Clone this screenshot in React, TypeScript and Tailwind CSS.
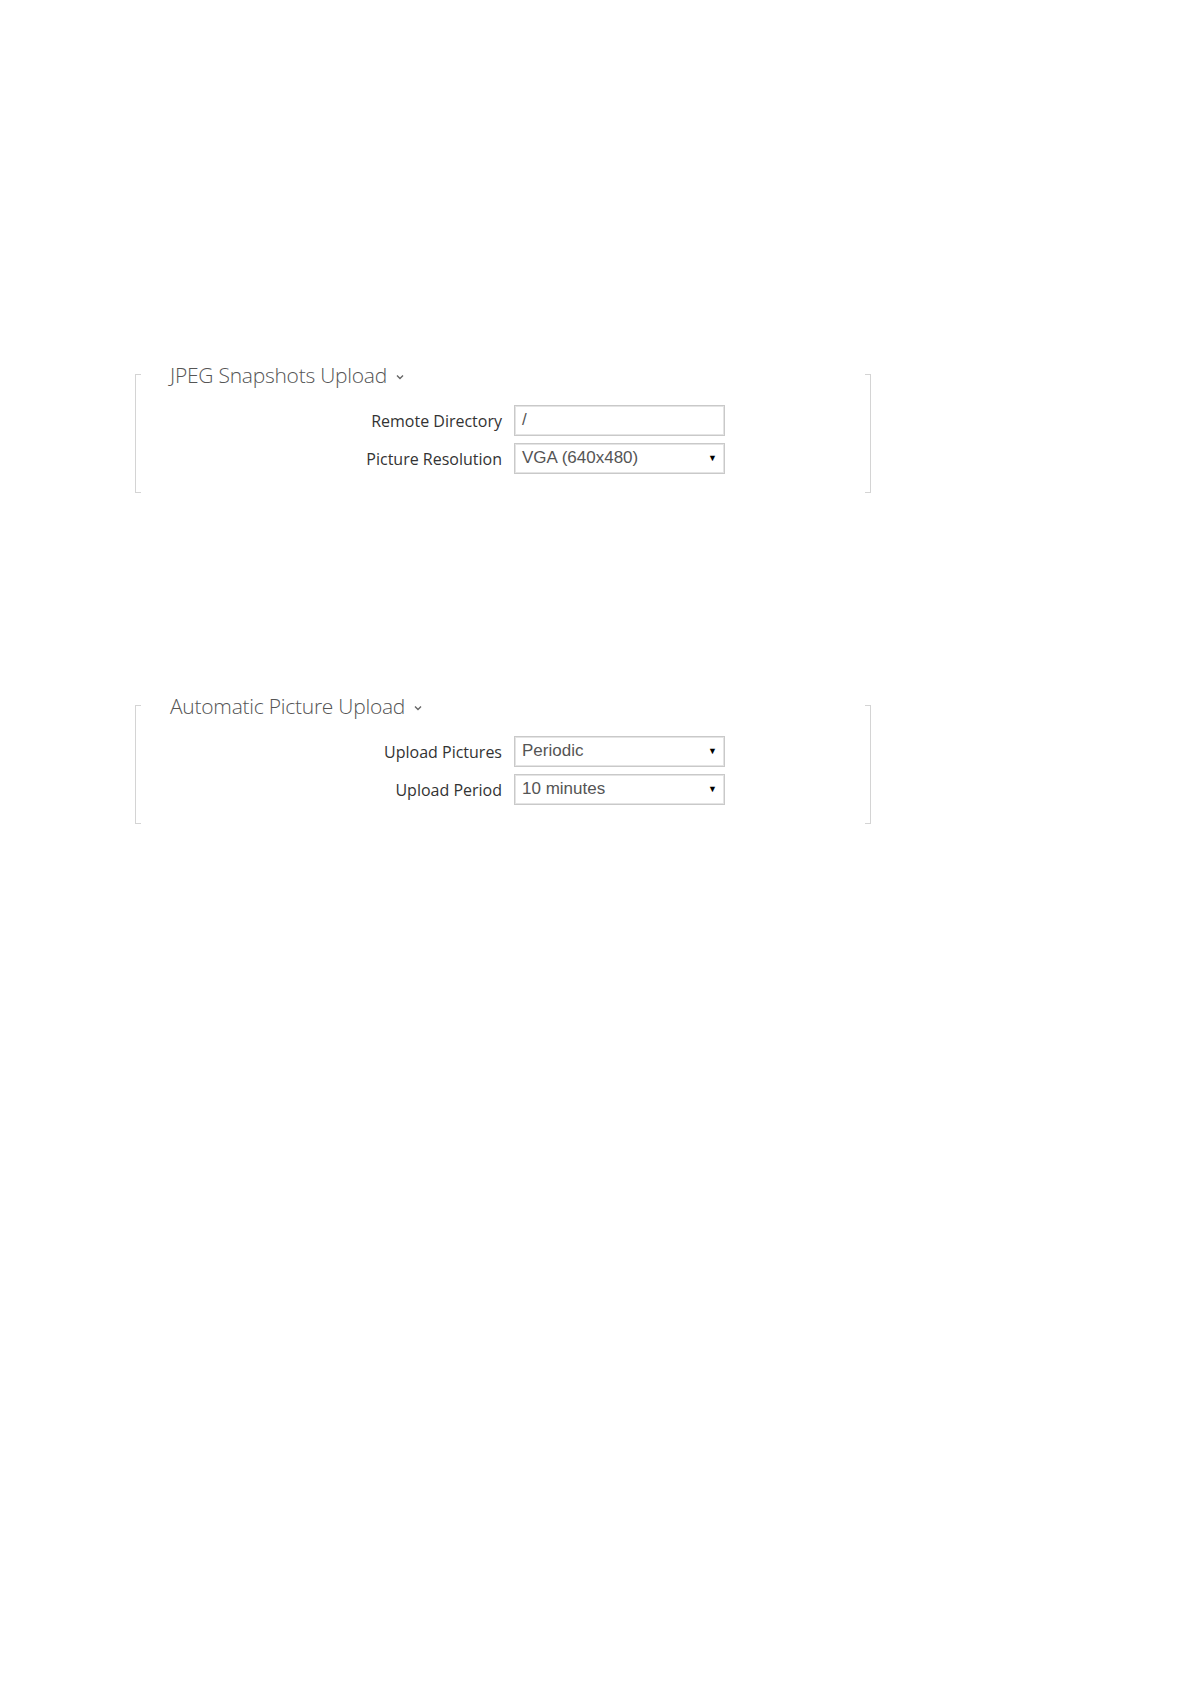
import type {ReactNode} from 'react';

interface FieldRow {
  label: string;
  value: string;
  kind: 'text' | 'select';
}

function Chevron() {
  return (
    <svg className="ml-[9px] mt-[4px] h-[6px] w-[8px]" viewBox="0 0 8 6" fill="none">
      <polyline points="1,1.5 4,4.5 7,1.5" stroke="#666" strokeWidth="1.4" />
    </svg>
  );
}

function Field({row}: {row: FieldRow}) {
  return (
    <div className="flex items-center">
      <div className="w-[373px] pr-[12px] text-right text-[16px] leading-[20px] text-[#333]">{row.label}</div>
      <div className="flex h-[31px] w-[211px] items-center justify-between border border-[#c9c9c9] bg-white pl-[7px] pr-[7px] font-['Liberation_Sans',Arial,sans-serif] text-[17px] text-[#555] shadow-[inset_0_0_0_1px_#e4e4e4]">
        <span className="-mt-[2px]">{row.value}</span>
        {row.kind === 'select' ? <span className="text-[9px] text-black">▼</span> : null}
      </div>
    </div>
  );
}

function Section({title, rows}: {title: string; rows: FieldRow[]}): ReactNode {
  return (
    <div className="flex h-[119px] w-[736px]">
      <div className="w-[6px] border-y border-l border-[#d4d4d4]" />
      <div className="flex-1">
        <div className="-mt-[14px] flex items-center pl-[29px] text-[21px] font-light leading-[30px] tracking-[-0.25px] text-[#555]">
          {title}
          <Chevron />
        </div>
        <div className="mt-[15px] flex flex-col gap-[7px]">
          {rows.map((row) => (
            <Field key={row.label} row={row} />
          ))}
        </div>
      </div>
      <div className="w-[6px] border-y border-r border-[#d4d4d4]" />
    </div>
  );
}

export default function App() {
  return (
    <div className="min-h-[1684px] bg-white pl-[135px] pt-[374px] font-['Open_Sans',sans-serif]">
      <Section
        title="JPEG Snapshots Upload"
        rows={[
          {label: 'Remote Directory', value: '/', kind: 'text'},
          {label: 'Picture Resolution', value: 'VGA (640x480)', kind: 'select'},
        ]}
      />
      <div className="mt-[212px]">
        <Section
          title="Automatic Picture Upload"
          rows={[
            {label: 'Upload Pictures', value: 'Periodic', kind: 'select'},
            {label: 'Upload Period', value: '10 minutes', kind: 'select'},
          ]}
        />
      </div>
    </div>
  );
}
